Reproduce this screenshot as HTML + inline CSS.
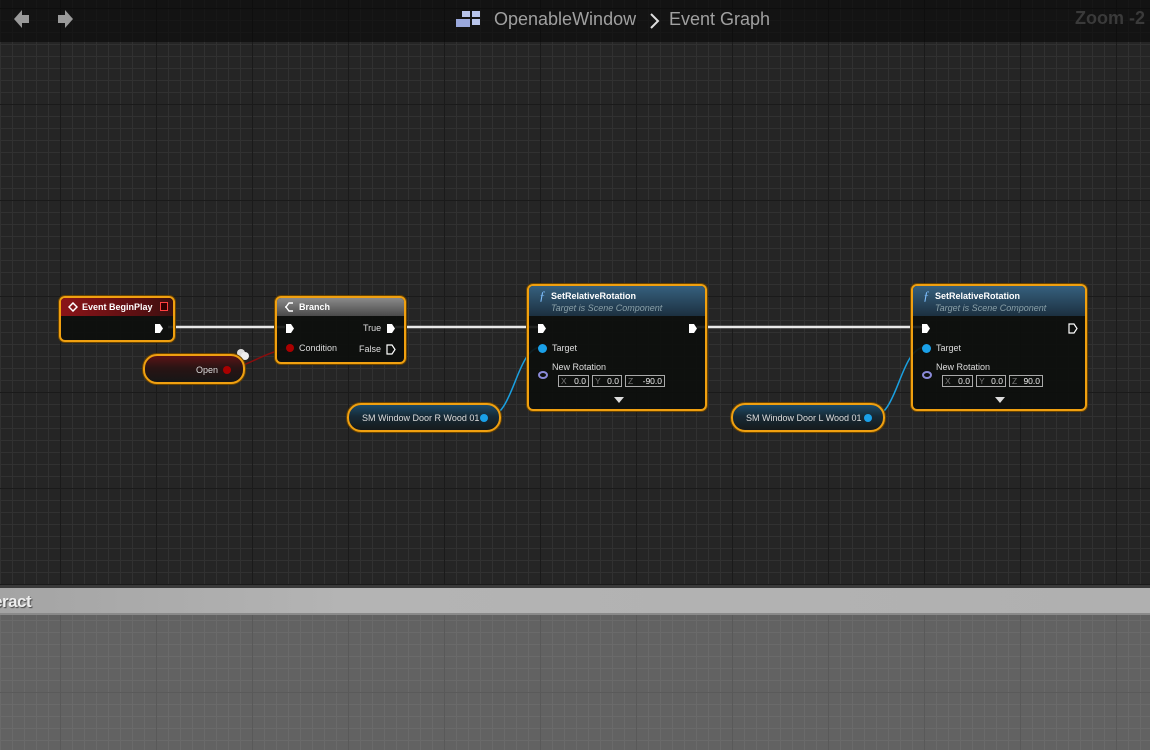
<!DOCTYPE html>
<html><head><meta charset="utf-8"><style>
*{margin:0;padding:0;box-sizing:border-box}
body{width:1150px;height:750px;overflow:hidden;position:relative;font-family:"Liberation Sans",sans-serif;background:#262626}
.grid{position:absolute;left:0;top:0;width:1150px;height:585px;background-color:#252525;
background-image:
linear-gradient(to right,#1a1a1a 0 1px,transparent 1px),
linear-gradient(to bottom,#1a1a1a 0 1px,transparent 1px),
linear-gradient(to right,#313131 0 1px,transparent 1px),
linear-gradient(to bottom,#313131 0 1px,transparent 1px);
background-size:96px 96px,96px 96px,12px 12px,12px 12px;
background-position:60px 8px,60px 8px,0 8px,0 8px;}
.top{position:absolute;left:0;top:0;width:1150px;height:42px;background:rgba(8,8,8,.62)}
.lower{position:absolute;left:0;top:585px;width:1150px;height:165px;background-color:#626262;
background-image:
linear-gradient(to right,#595959 0 1px,transparent 1px),
linear-gradient(to bottom,#5a5a5a 0 1px,transparent 1px),
linear-gradient(to right,#6a6a6a 0 1px,transparent 1px),
linear-gradient(to bottom,#6a6a6a 0 1px,transparent 1px);
background-size:96px 96px,96px 96px,12px 12px,12px 12px;
background-position:60px 8px,60px 8px,0 8px,0 8px;border-top:3px solid #3a3a3a}
.lhead{position:absolute;left:0;top:588px;width:1150px;height:27px;background:linear-gradient(to right,#a4a4a4,#b4b4b4 30%,#b0b0b0);border-bottom:2px solid #8a8a8a;font-weight:bold;font-size:17px;color:#eee;text-shadow:1px 1px 1px #444;padding:4px 0 0 0;letter-spacing:-0.5px}
.node{position:absolute;border:2px solid #f0a010;border-radius:6px;background:rgba(12,14,12,.9);box-shadow:0 0 0 1px #6a4400;color:#ddd;font-size:9px}
.hd{position:absolute;left:0;top:0;right:0;border-radius:4px 4px 0 0;color:#fff;font-weight:bold;font-size:9px}
.t{position:absolute;white-space:nowrap}
.pill{position:absolute;border:2px solid #f0a010;border-radius:14px;box-shadow:0 0 0 1px #6a4400;color:#ddd;font-size:9px}
.dot{position:absolute;width:8px;height:8px;border-radius:50%}
.vb{position:absolute;height:12px;border:1px solid #aaa;font-size:8.5px;color:#eee;top:0}
.vb span{color:#777;position:absolute;left:2px;top:0}
.vb b{font-weight:normal;position:absolute;right:2px;top:0}
</style></head><body>
<div class="grid"></div>
<div class="top"></div>
<svg style="position:absolute;left:12px;top:8px" width="64" height="24"><path d="M2 11 L10 2 L10 7 L17 7 L17 15 L10 15 L10 20 Z" fill="#9a9a9a"/><path d="M61 11 L53 2 L53 7 L46 7 L46 15 L53 15 L53 20 Z" fill="#9a9a9a"/></svg>
<div style="position:absolute;left:462px;top:11px;width:8px;height:6px;background:#b8c4ea"></div>
<div style="position:absolute;left:472px;top:11px;width:8px;height:6px;background:#b8c4ea"></div>
<div style="position:absolute;left:456px;top:19px;width:14px;height:8px;background:#9aa8dc"></div>
<div style="position:absolute;left:472px;top:19px;width:8px;height:6px;background:#b8c4ea"></div>
<div class="t" style="left:494px;top:9px;font-size:18px;color:#a0a0a0">OpenableWindow</div>
<svg style="position:absolute;left:649px;top:12px" width="12" height="18"><path d="M2 2 L9 9 L2 16" stroke="#ddd" stroke-width="2" fill="none"/></svg>
<div class="t" style="left:669px;top:9px;font-size:18px;color:#a0a0a0">Event Graph</div>
<div class="t" style="left:1075px;top:8px;font-size:18px;font-weight:bold;color:#3a3a3a">Zoom -2</div>

<svg style="position:absolute;left:0;top:0" width="1150" height="585">
<g stroke="#e8e8e8" stroke-width="2.5" fill="none">
<line x1="168" y1="327" x2="285" y2="327"/>
<line x1="395" y1="327" x2="538" y2="327"/>
<line x1="697" y1="327" x2="922" y2="327"/>
</g>
<path d="M228 370 C250 365, 265 352, 290 348" stroke="#8a0d0d" stroke-width="1.5" fill="none"/>
<path d="M486 418 C515 418, 515 347, 542 347" stroke="#1aa0e0" stroke-width="1.5" fill="none"/>
<path d="M870 418 C899 418, 899 347, 926 347" stroke="#1aa0e0" stroke-width="1.5" fill="none"/>
<circle cx="241" cy="353" r="4" fill="#ddd"/><circle cx="245" cy="356" r="4" fill="#eee"/>
</svg>

<div class="node" style="left:59px;top:296px;width:116px;height:46px">
<div class="hd" style="height:18px;background:linear-gradient(to right,#8a1418,#5a1012 70%,#3a1010)"></div>
<svg class="t" style="left:7px;top:4px" width="10" height="10"><path d="M5 1 L9 5 L5 9 L1 5 Z" stroke="#fff" stroke-width="1.5" fill="none"/></svg>
<div class="t" style="left:21px;top:4px;color:#fff;font-weight:bold">Event BeginPlay</div>
<div class="t" style="left:99px;top:4px;width:8px;height:9px;border:1.5px solid #ff4040;background:#300"></div>
<svg class="t" style="left:93px;top:25px" width="10" height="11"><path d="M1 1 H6 L9 5.5 L6 10 H1 Z" fill="#fff"/></svg>
</div>

<div class="node" style="left:275px;top:296px;width:131px;height:68px">
<div class="hd" style="height:18px;background:linear-gradient(to bottom,#8a8a8a,#4a4a4a)"></div>
<svg class="t" style="left:8px;top:4px" width="10" height="10"><path d="M8 1 H4 L1 5 L4 9 H8 M1 5 H0" stroke="#fff" stroke-width="1.4" fill="none"/></svg>
<div class="t" style="left:22px;top:4px;color:#fff;font-weight:bold">Branch</div>
<svg class="t" style="left:8px;top:25px" width="10" height="11"><path d="M1 1 H6 L9 5.5 L6 10 H1 Z" fill="#fff"/></svg>
<div class="t" style="left:86px;top:25px">True</div>
<svg class="t" style="left:109px;top:25px" width="10" height="11"><path d="M1 1 H6 L9 5.5 L6 10 H1 Z" fill="#fff"/></svg>
<div class="dot" style="left:9px;top:46px;background:#a00"></div>
<div class="t" style="left:22px;top:45px">Condition</div>
<div class="t" style="left:82px;top:46px">False</div>
<svg class="t" style="left:109px;top:46px" width="10" height="11"><path d="M1 1 H6 L9 5.5 L6 10 H1 Z" fill="none" stroke="#fff" stroke-width="1.2"/></svg>
</div>

<div class="pill" style="left:143px;top:354px;width:102px;height:30px;background:linear-gradient(to bottom,#5a1416,#2a1414 45%,#161616)">
<div class="t" style="left:51px;top:9px">Open</div>
<div class="dot" style="left:78px;top:10px;background:#a00"></div>
</div>

<div class="node" style="left:527px;top:284px;width:180px;height:127px">
<div class="hd" style="height:30px;background:linear-gradient(to bottom,#36607e,#1c3040)"></div>
<div class="t" style="left:10px;top:2px;color:#7fc0ff;font-style:italic;font-size:13px;font-family:'Liberation Serif',serif">ƒ</div>
<div class="t" style="left:22px;top:5px;color:#fff;font-weight:bold">SetRelativeRotation</div>
<div class="t" style="left:22px;top:17px;color:#8aa0a8;font-style:italic">Target is Scene Component</div>
<svg class="t" style="left:8px;top:37px" width="10" height="11"><path d="M1 1 H6 L9 5.5 L6 10 H1 Z" fill="#fff"/></svg>
<svg class="t" style="left:159px;top:37px" width="10" height="11"><path d="M1 1 H6 L9 5.5 L6 10 H1 Z" fill="#fff"/></svg>
<div class="dot" style="left:9px;top:58px;background:#1aa0e8;width:9px;height:9px"></div>
<div class="t" style="left:23px;top:57px">Target</div>
<div class="t" style="left:23px;top:76px">New Rotation</div>
<div class="t" style="left:9px;top:85px;width:10px;height:8px;border:2px solid #8a8ad8;border-radius:50%"></div>
<div class="vb" style="left:29px;top:89px;width:31px"><span>X</span><b>0.0</b></div>
<div class="vb" style="left:63px;top:89px;width:30px"><span>Y</span><b>0.0</b></div>
<div class="vb" style="left:96px;top:89px;width:40px"><span>Z</span><b>-90.0</b></div>
<svg class="t" style="left:85px;top:111px" width="10" height="7"><path d="M0 0 H10 L5 6 Z" fill="#ddd"/></svg>
</div>

<div class="pill" style="left:347px;top:403px;width:154px;height:29px;background:linear-gradient(to bottom,#1c4a68,#172a36 45%,#161a1c)">
<div class="t" style="left:13px;top:8px">SM Window Door R Wood 01</div>
<div class="dot" style="left:131px;top:9px;background:#1aa0e8"></div>
</div>

<div class="node" style="left:911px;top:284px;width:176px;height:127px">
<div class="hd" style="height:30px;background:linear-gradient(to bottom,#36607e,#1c3040)"></div>
<div class="t" style="left:10px;top:2px;color:#7fc0ff;font-style:italic;font-size:13px;font-family:'Liberation Serif',serif">ƒ</div>
<div class="t" style="left:22px;top:5px;color:#fff;font-weight:bold">SetRelativeRotation</div>
<div class="t" style="left:22px;top:17px;color:#8aa0a8;font-style:italic">Target is Scene Component</div>
<svg class="t" style="left:8px;top:37px" width="10" height="11"><path d="M1 1 H6 L9 5.5 L6 10 H1 Z" fill="#fff"/></svg>
<svg class="t" style="left:155px;top:37px" width="10" height="11"><path d="M1 1 H6 L9 5.5 L6 10 H1 Z" fill="none" stroke="#fff" stroke-width="1.2"/></svg>
<div class="dot" style="left:9px;top:58px;background:#1aa0e8;width:9px;height:9px"></div>
<div class="t" style="left:23px;top:57px">Target</div>
<div class="t" style="left:23px;top:76px">New Rotation</div>
<div class="t" style="left:9px;top:85px;width:10px;height:8px;border:2px solid #8a8ad8;border-radius:50%"></div>
<div class="vb" style="left:29px;top:89px;width:31px"><span>X</span><b>0.0</b></div>
<div class="vb" style="left:63px;top:89px;width:30px"><span>Y</span><b>0.0</b></div>
<div class="vb" style="left:96px;top:89px;width:34px"><span>Z</span><b>90.0</b></div>
<svg class="t" style="left:82px;top:111px" width="10" height="7"><path d="M0 0 H10 L5 6 Z" fill="#ddd"/></svg>
</div>

<div class="pill" style="left:731px;top:403px;width:154px;height:29px;background:linear-gradient(to bottom,#1c4a68,#172a36 45%,#161a1c)">
<div class="t" style="left:13px;top:8px">SM Window Door L Wood 01</div>
<div class="dot" style="left:131px;top:9px;background:#1aa0e8"></div>
</div>

<div class="lower"></div>
<div class="lhead"><span style="position:relative;left:-7px">eract</span></div>
</body></html>
